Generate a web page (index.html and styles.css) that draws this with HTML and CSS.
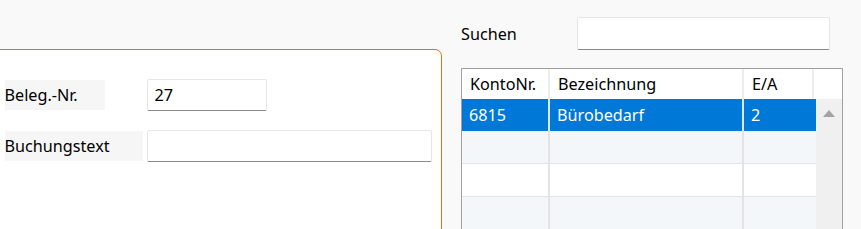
FILE: index.html
```html
<!DOCTYPE html>
<html lang="de">
<head>
<meta charset="utf-8">
<title>Buchung</title>
<link rel="stylesheet" href="styles.css">
</head>
<body>
<div class="page">
  <section class="group">
    <div class="form">
      <div class="label label-short">Beleg.-Nr.</div>
      <div class="input input-short">27</div>
      <div class="label label-long">Buchungstext</div>
      <div class="input input-long"></div>
    </div>
  </section>
  <section class="side">
    <div class="search">
      <span class="search-label">Suchen</span>
      <div class="input input-search"></div>
    </div>
    <div class="table">
      <div class="thead">
        <div class="th c1">KontoNr.</div>
        <div class="th c2">Bezeichnung</div>
        <div class="th c3h">E/A</div>
        <div class="th c4h"></div>
      </div>
      <div class="tbody">
        <div class="rows">
          <div class="tr selected">
            <div class="td c1">6815</div>
            <div class="td c2">Bürobedarf</div>
            <div class="td c3">2</div>
          </div>
          <div class="tr alt">
            <div class="td c1"></div>
            <div class="td c2"></div>
            <div class="td c3"></div>
          </div>
          <div class="tr">
            <div class="td c1"></div>
            <div class="td c2"></div>
            <div class="td c3"></div>
          </div>
          <div class="tr alt">
            <div class="td c1"></div>
            <div class="td c2"></div>
            <div class="td c3"></div>
          </div>
        </div>
        <div class="scrollbar">
          <div class="arrow-up"></div>
        </div>
      </div>
    </div>
  </section>
</div>
</body>
</html>
```
FILE: styles.css
```css
* { box-sizing: border-box; }
html, body {
  margin: 0;
  padding: 0;
  background: #f9f9f9;
  font-family: "Noto Sans", "Open Sans", sans-serif;
  font-size: 16.2px;
  color: #000;
}
.page {
  display: flex;
  align-items: flex-start;
  height: 229px;
  overflow: hidden;
}
.group {
  margin-top: 49px;
  margin-left: -12px;
  width: 454px;
  height: 220px;
  flex: none;
  border: 1.5px solid #dc7318;
  border-radius: 7px;
  background: #fff;
  padding: 28.5px 0 0 15.5px;
}
.form {
  display: grid;
  grid-template-columns: 142px 285px;
  row-gap: 19px;
  align-items: center;
}
.label {
  background: #f6f6f6;
  height: 30px;
  line-height: 30px;
  white-space: nowrap;
  justify-self: start;
}
.label-short { width: 100px; }
.label-long { width: 138px; }
.input {
  height: 32px;
  background: #fff;
  border: 1px solid #e6e6e6;
  border-bottom: 1px solid #8a8a8a;
  border-radius: 2px;
  padding-left: 7px;
  line-height: 30px;
}
.input-short { width: 120px; }
.input-long { width: 285px; }
.side {
  margin-left: 19px;
  width: 382px;
  flex: none;
  padding-top: 17px;
}
.search {
  display: flex;
  align-items: center;
  height: 33px;
}
.search-label {
  width: 116px;
  flex: none;
}
.input-search {
  width: 253px;
  height: 33px;
}
.table {
  margin-top: 18px;
  border: 1px solid #a0a0a0;
  background: #fff;
  height: 200px;
}
.thead {
  display: grid;
  grid-template-columns: 88px 194px 70px 1fr;
  height: 30px;
  background: #fff;
}
.th {
  line-height: 30px;
  padding-left: 8px;
  border-right: 2px solid #ededed;
  white-space: nowrap;
}
.c4h { border-right: none; margin-right: 2px; }
.tbody {
  display: flex;
}
.rows {
  width: 354px;
}
.tr {
  display: grid;
  grid-template-columns: 88px 194px 72px;
  height: 33px;
  border-bottom: 1px solid #e2e2e2;
}
.tr.alt { background: #f4f7fa; }
.tr.selected {
  background: #0078d7;
  color: #fff;
  border-bottom-color: #0078d7;
  height: 32px;
}
.td {
  line-height: 32px;
  padding-left: 7px;
  border-right: 2px solid #e4e4e4;
  white-space: nowrap;
}
.td.c3 { border-right: none; }
.tr.selected .td { border-right-color: #dde9f5; }
.tr.selected .td.c3 { border-right: none; }
.scrollbar {
  flex: 1;
  background: #f0f0f0;
  height: 170px;
  display: flex;
  justify-content: center;
  padding-top: 11px;
}
.arrow-up {
  width: 0;
  height: 0;
  border-left: 6px solid transparent;
  border-right: 6px solid transparent;
  border-bottom: 7px solid #a3a3a3;
}
```
